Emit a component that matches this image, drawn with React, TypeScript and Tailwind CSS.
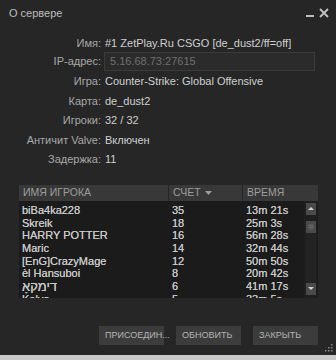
import React from "react";

const rows: [string, string, string][] = [
  ["biBa4ka228", "35", "13m 21s"],
  ["Skreik", "18", "25m 3s"],
  ["HARRY POTTER", "16", "56m 28s"],
  ["Maric", "14", "32m 44s"],
  ["[EnG]CrazyMage", "12", "50m 50s"],
  ["èl Hansuboi", "8", "20m 42s"],
  ["דימקאָ", "6", "41m 17s"],
  ["Kolya", "5", "33m 5s"],
];

const info: [string, string][] = [
  ["Игра:", "Counter-Strike: Global Offensive"],
  ["Карта:", "de_dust2"],
  ["Игроки:", "32 / 32"],
  ["Античит Valve:", "Включен"],
  ["Задержка:", "11"],
];

export default function App() {
  return (
    <div
      className="w-[336px] h-[360px] bg-[#c9c9c9] flex flex-col"
      style={{ fontFamily: '"Liberation Sans", Arial, sans-serif' }}
    >
      <div className="h-[355px] bg-[#262626] flex flex-col relative">
        {/* Title bar */}
        <div className="h-[26px] flex items-center justify-between pl-[9px] pr-[7px]">
          <span className="text-[11px] text-[#bdbdbd]">О сервере</span>
          <div className="flex items-center gap-[5px]">
            <div className="w-[8px] h-[2px] bg-[#bdbdbd] mt-[6px]" />
            <svg width="10" height="10" viewBox="0 0 10 10">
              <path d="M1 1 L9 9 M9 1 L1 9" stroke="#c4c4c4" strokeWidth="1.8" />
            </svg>
          </div>
        </div>

        {/* Info */}
        <div className="flex flex-col text-[11px] mt-[10px]">
          <div className="flex items-center h-[14px]">
            <span className="w-[101px] text-right text-[#a8a8a8]">Имя:</span>
            <span className="pl-[4px] text-[#d0d0d0]">#1 ZetPlay.Ru CSGO [de_dust2/ff=off]</span>
          </div>
          <div className="flex items-center h-[19px] mt-[2px] mb-[1px]">
            <span className="w-[101px] text-right text-[#a8a8a8]">IP-адрес:</span>
            <div className="ml-[3px] w-[211px] h-[19px] bg-[#2b2b2b] border border-[#3b3b3b] flex items-center pl-[5px] text-[#6f6f6f]">
              5.16.68.73:27615
            </div>
          </div>
          {info.map(([l, v]) => (
            <div key={l} className="flex items-center h-[19.4px]">
              <span className="w-[101px] text-right text-[#a8a8a8]">{l}</span>
              <span className="pl-[4px] text-[#d0d0d0]">{v}</span>
            </div>
          ))}
        </div>

        {/* Table */}
        <div className="mx-[19px] mt-[16px] w-[299px] flex flex-col">
          <div className="h-[16px] bg-[#383838] flex items-center text-[10.5px] text-[#9d9d9d]">
            <div className="w-[150px] pl-[4px] border-r border-[#262626] h-full flex items-center">ИМЯ ИГРОКА</div>
            <div className="w-[74px] pl-[4px] border-r border-[#262626] h-full flex items-center gap-[4px]">
              СЧЕТ
              <svg width="7" height="4" viewBox="0 0 7 4">
                <path d="M0 0 H7 L3.5 4 Z" fill="#9d9d9d" />
              </svg>
            </div>
            <div className="pl-[4px] h-full flex items-center">ВРЕМЯ</div>
          </div>
          <div className="h-[97px] bg-[#1b1b1b] flex overflow-hidden">
            <div className="flex-1 flex flex-col pt-[3px] overflow-hidden">
              {rows.map(([n, s, t], i) => (
                <div key={n} className="h-[12.7px] shrink-0 flex items-center text-[11px] text-[#c8c8c8]">
                  <div
                    className={
                      i === 6
                        ? "w-[150px] pl-[3px] whitespace-nowrap text-[13px] [text-shadow:0_0_0.4px_#c8c8c8]"
                        : "w-[150px] pl-[3px] whitespace-nowrap [text-shadow:0_0_0.4px_#c8c8c8]"
                    }
                  >
                    {n}
                  </div>
                  <div className="w-[74px] pl-[3px] [text-shadow:0_0_0.4px_#c8c8c8]">{s}</div>
                  <div className="pl-[3px] [text-shadow:0_0_0.4px_#c8c8c8]">{t}</div>
                </div>
              ))}
            </div>
            <div className="w-[13px] mr-[1px] flex flex-col items-center pt-[2px] pb-[3px] bg-[#1f1f1f]">
              <div className="w-[10px] h-[12px] bg-[#4a4a4a] flex items-center justify-center">
                <svg width="6" height="3" viewBox="0 0 6 3"><path d="M0 3 H6 L3 0 Z" fill="#cfcfcf" /></svg>
              </div>
              <div className="w-[10px] h-[12px] bg-[#4a4a4a] mt-[6px] flex items-center justify-center">
                <svg width="6" height="6" viewBox="0 0 6 6">
                  <path d="M0 1.5 H6 M0 3.5 H6 M2 0 V6 M4 0 V6" stroke="#6a6a6a" strokeWidth="0.8" />
                </svg>
              </div>
              <div className="flex-1 w-[10px] bg-[#232323]" />
              <div className="w-[10px] h-[12px] bg-[#4a4a4a] flex items-center justify-center">
                <svg width="6" height="3" viewBox="0 0 6 3"><path d="M0 0 H6 L3 3 Z" fill="#cfcfcf" /></svg>
              </div>
            </div>
          </div>
        </div>

        {/* Buttons */}
        <div className="flex justify-end gap-[12px] pr-[18px] mt-[28px]">
          {["ПРИСОЕДИН...", "ОБНОВИТЬ", "ЗАКРЫТЬ"].map((b) => (
            <div
              key={b}
              className="w-[65px] h-[19px] bg-[#3c3c3c] flex items-center pl-[6px] text-[9px] text-[#b4b4b4]"
            >
              {b}
            </div>
          ))}
        </div>

        {/* Resize grip */}
        <svg className="absolute right-[3px] bottom-[3px]" width="8" height="8" viewBox="0 0 8 8">
          <rect x="6" y="0" width="1.5" height="1.5" fill="#8a8a8a" />
          <rect x="3" y="3" width="1.5" height="1.5" fill="#8a8a8a" />
          <rect x="6" y="3" width="1.5" height="1.5" fill="#8a8a8a" />
          <rect x="0" y="6" width="1.5" height="1.5" fill="#8a8a8a" />
          <rect x="3" y="6" width="1.5" height="1.5" fill="#8a8a8a" />
          <rect x="6" y="6" width="1.5" height="1.5" fill="#8a8a8a" />
        </svg>
      </div>
    </div>
  );
}
